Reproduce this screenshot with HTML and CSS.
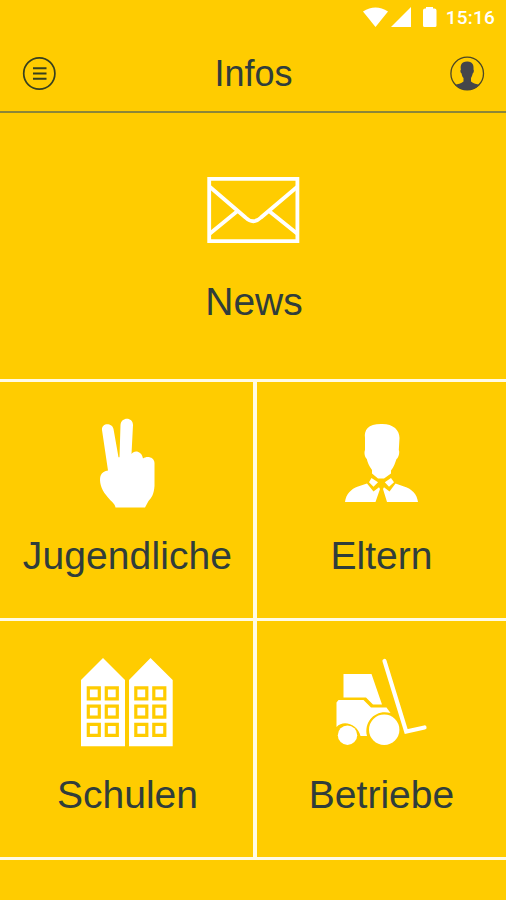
FILE: index.html
```html
<!DOCTYPE html>
<html lang="de">
<head>
<meta charset="utf-8">
<title>Infos</title>
<link rel="stylesheet" href="styles.css">
</head>
<body>
<div class="status">
  <svg width="76" height="24" viewBox="360 4 76 24" fill="#fff">
    <path d="M362 11.500Q374.500 3.500 387 11.500L374.500 27Z"/>
    <path d="M410 7V27H390Z"/>
    <path d="M425 7h7v1.500h1.500q2 0 2 2V25.500q0 1.500-1.500 1.500H423.500q-1.500 0-1.500-1.500V10.500q0-2 2-2h1Z"/>
  </svg>
  <span class="clock">15:16</span>
</div>
<header class="bar">
  <svg width="34" height="34" viewBox="22 56 34 34" fill="none" stroke="#37401f">
    <circle cx="39.300" cy="73.500" r="15.600" stroke-width="1.700"/>
    <path d="M33 68.300H46.500M33 73.500H46.500M33 78.700H46.500" stroke-width="1.900"/>
  </svg>
  <h1>Infos</h1>
  <svg width="36" height="36" viewBox="449 55 36 36">
    <circle cx="467.200" cy="73.500" r="16.300" fill="none" stroke="#4b4725" stroke-width="1.300"/>
    <path d="M467 61.500C472.500 61.200 474 65 473.500 69.500C474.300 70 473.800 73 472.700 73.500C472.300 76 471.500 77 471 78V81.500C473 83.500 477 84 479.500 85Q474.500 90 467.200 90Q460 90 455 85C457.500 84 461.500 83.500 463.500 81.500V78C462.500 77 461.900 75.500 461.600 73.500C460.300 73 460 70 460.900 69.500C460.200 65.500 461.200 61.500 467 61.500Z" fill="#44464a"/>
  </svg>
</header>
<main>
  <section class="tile news">
    <svg class="icon" width="94" height="68" viewBox="206 176 94 68" fill="none" stroke="#fff" stroke-width="3.800">
      <path d="M209.200 178.900H297.400V241.200H209.200Z"/>
      <path d="M210 187L245.500 217.500Q253.300 225 261 217.500L297 187M210 233.500L237.500 211M297 233.500L269 211"/>
    </svg>
    <h2>News</h2>
  </section>
  <div class="grid">
    <section class="tile young">
      <svg class="icon" width="60" height="94" viewBox="97 416 60 94" fill="#fff">
        <path d="M102 430C101.300 422.500 112.300 422.500 113.500 429L118.500 457.300H119.500L120.500 425C121 416.500 133 416.500 133 425L131.500 454C134 450 141.500 450.500 143 458.500C147 455.500 154.300 457 154.500 463V486C154 494 151.500 498 148.500 501L145 507.500H115.500C115 503 110 501 106 495C101 489 99 481 100.500 476C102 472 105 471 108 470.500Z"/>
      </svg>
      <h2>Jugendliche</h2>
    </section>
    <section class="tile parents">
      <svg class="icon" width="78" height="84" viewBox="343 421 78 84" fill="#fff">
        <path d="M381 424C393 423.500 399.500 430 399.500 438L398.800 450C400 452 398.500 458 396.500 459C395 463 394 467 391 470.500V473.500L384 478.500H378L372 473.500V470C369 466 367.500 462 366.800 459C364.500 457 364 452 365 450V438C364 430 368 424 381 424Z"/>
        <path d="M371.500 478L378 482.300L373.500 486.800L369 482.300Z"/>
        <path d="M391 478L394 482.300L389 486.800L384.800 482.300Z"/>
        <path d="M367 483.500L373.500 491.500L379 487.200L380 489L375.500 502H345C346 494 351 489 358 486.500Z"/>
        <path d="M395.500 483.500L389.500 491.500L384 487.200L383 489L387 502H418C417 494 412 489 404 486.500Z"/>
      </svg>
      <h2>Eltern</h2>
    </section>
    <section class="tile schools">
      <svg class="icon" width="94" height="90" viewBox="80 657 94 90">
        <path d="M81 680L103 658L125 680V746.300H81ZM129 680L150.500 658L172.700 680V746.300H129Z" fill="#fff"/>
        <g fill="none" stroke="#fc0" stroke-width="3.200">
          <path id="windows" d="M88.300 687.800h11v11h-11ZM106.300 687.800h11v11h-11ZM88.300 706.200h11v11h-11ZM106.300 706.200h11v11h-11ZM88.300 724.400h11v11h-11ZM106.300 724.400h11v11h-11Z"/>
          <use href="#windows" x="47.500"/>
        </g>
      </svg>
      <h2>Schulen</h2>
    </section>
    <section class="tile firms">
      <svg class="icon" width="94" height="90" viewBox="335 657 94 90" fill="#fff">
        <path d="M343.500 674H371.500L382 704.500H373L366 697.500H343.500Z"/>
        <path d="M338.500 700H363.500L371 707.500H386.500L390.500 713C376 709 363.500 721 367 736H360.500C358 725 344 719 336.500 727V702.500Z"/>
        <circle cx="347.500" cy="735.200" r="9.700"/>
        <circle cx="384.200" cy="729.700" r="15.200"/>
        <path d="M384.500 661L406.200 731.500L424.500 727.500" fill="none" stroke="#fff" stroke-width="4.200" stroke-linecap="round"/>
      </svg>
      <h2>Betriebe</h2>
    </section>
  </div>
</main>
</body>
</html>
```
FILE: styles.css
```css
* {
  box-sizing: border-box;
}

body {
  margin: 0;
  height: 900px;
  overflow: hidden;
  background: #fc0;
  color: #303d3b;
  font-family: "Liberation Sans", Arial, sans-serif;
}

svg {
  display: block;
  flex: none;
}

h1,
h2 {
  margin: 0;
  font-weight: 400;
  white-space: nowrap;
}

.status {
  height: 36px;
  padding: 4px 11px 0 0;
  display: flex;
  justify-content: flex-end;
  gap: 9px;
  color: #fff;
}

.clock {
  font: 500 19px/28px Roboto, sans-serif;
  letter-spacing: 0.2px;
}

.bar {
  height: 77px;
  padding: 0 21px 2px 22px;
  display: flex;
  align-items: center;
  justify-content: space-between;
  border-bottom: 2px solid #8b8638;
}

h1 {
  padding: 2px 0 0 2px;
  font-size: 36px;
  line-height: 40px;
}

h2 {
  padding-left: 2px;
  font-size: 39px;
  line-height: 44px;
}

.tile {
  display: flex;
  flex-direction: column;
  align-items: center;
}

.news {
  height: 266px;
  padding-top: 63px;
}

.news .icon {
  margin-bottom: 36px;
}

.grid {
  display: grid;
  grid-template: 236px 236px / 253px 249px;
  gap: 3px 4px;
  padding: 3px 0;
  background: #fffbe5;
}

.grid .tile {
  background: #fc0;
}

.young {
  padding-top: 34px;
}

.young .icon {
  margin-bottom: 24px;
}

.young h2 {
  letter-spacing: 0.1px;
}

.parents {
  padding-top: 39px;
}

.parents .icon {
  margin-bottom: 29px;
}

.parents h2,
.firms h2 {
  padding-left: 0;
}

.schools,
.firms {
  padding-top: 36px;
}

.schools .icon,
.firms .icon {
  margin-bottom: 26px;
}
```
